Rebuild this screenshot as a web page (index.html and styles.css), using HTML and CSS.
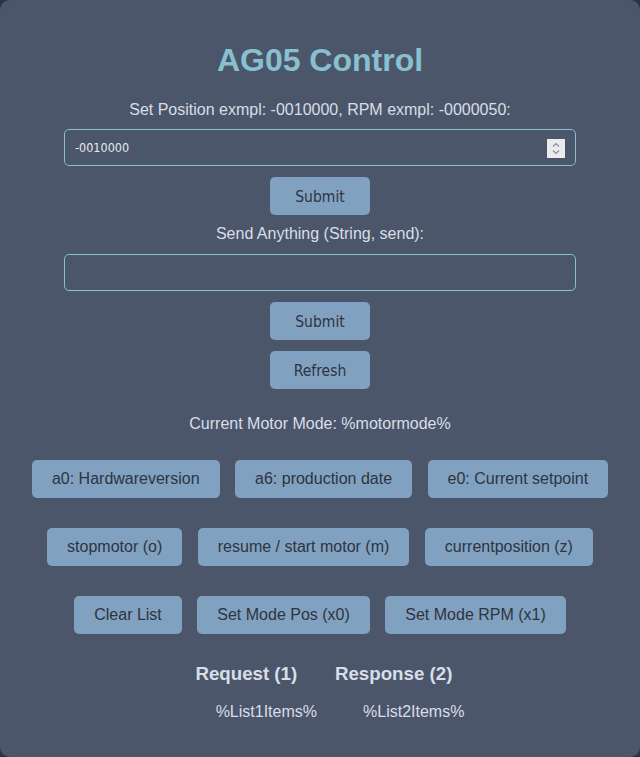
FILE: index.html
```html
<!DOCTYPE html>
<html lang="en">
<head>
<meta charset="utf-8">
<title>AG05 Control</title>
<link rel="stylesheet" href="styles.css">
</head>
<body>
<div class="panel">
  <h1 class="title">AG05 Control</h1>
  <label class="label" for="pos">Set Position exmpl: -0010000, RPM exmpl: -0000050:</label>
  <div class="field">
    <input class="input" id="pos" type="text" value="-0010000">
    <span class="spin" aria-hidden="true">
      <svg width="18" height="19" viewBox="0 0 18 19">
        <path d="M6 7.5 L9 4.5 L12 7.5" fill="none" stroke="#8a8f99" stroke-width="1.2"/>
        <path d="M6 11.5 L9 14.5 L12 11.5" fill="none" stroke="#8a8f99" stroke-width="1.2"/>
      </svg>
    </span>
  </div>
  <button class="btn-small">Submit</button>
  <label class="label label-gap" for="any">Send Anything (String, send):</label>
  <div class="field">
    <input class="input" id="any" type="text" value="">
  </div>
  <button class="btn-small">Submit</button>
  <button class="btn-small">Refresh</button>
  <p class="mode">Current Motor Mode: %motormode%</p>
  <div class="rows">
    <div class="row">
      <button class="btn">a0: Hardwareversion</button>
      <button class="btn">a6: production date</button>
      <button class="btn">e0: Current setpoint</button>
    </div>
    <div class="row">
      <button class="btn">stopmotor (o)</button>
      <button class="btn">resume / start motor (m)</button>
      <button class="btn">currentposition (z)</button>
    </div>
    <div class="row">
      <button class="btn">Clear List</button>
      <button class="btn">Set Mode Pos (x0)</button>
      <button class="btn">Set Mode RPM (x1)</button>
    </div>
  </div>
  <div class="lists">
    <div class="col">
      <h3 class="col-title">Request (1)</h3>
      <ul class="items"><li>%List1Items%</li></ul>
    </div>
    <div class="col">
      <h3 class="col-title">Response (2)</h3>
      <ul class="items"><li>%List2Items%</li></ul>
    </div>
  </div>
</div>
</body>
</html>
```
FILE: styles.css
```css
html, body {
  margin: 0;
  padding: 0;
  background: #2e3440;
}
.panel {
  background: #4c566a;
  border-radius: 10px;
  padding: 20px;
  min-height: 757px;
  box-sizing: border-box;
  text-align: center;
  font-family: "Liberation Sans", Arial, sans-serif;
  font-size: 16px;
  color: #d8dee9;
}
.title {
  margin: 22.4px 0 21.44px;
  font-size: 32px;
  line-height: 37px;
  font-weight: bold;
  color: #88c0d0;
}
.label {
  display: block;
  line-height: 18px;
}
.label-gap {
  margin-top: 10px;
}
.field {
  position: relative;
  width: 512px;
  margin: 10.5px auto 0;
}
.input {
  display: block;
  width: 512px;
  height: 37px;
  box-sizing: border-box;
  border: 1px solid #88c0d0;
  border-radius: 5px;
  background: transparent;
  color: #e5e9f0;
  padding: 0 10px;
  font-family: "DejaVu Sans Condensed", "DejaVu Sans", sans-serif;
  font-size: 12.5px;
  outline: none;
}
.spin {
  position: absolute;
  left: 483px;
  top: 10px;
  width: 18px;
  height: 19px;
  background: #ebebee;
  display: block;
}
.spin svg {
  display: block;
}
.btn-small {
  display: block;
  width: 100px;
  height: 38px;
  margin: 11px auto 0;
  border: none;
  border-radius: 5px;
  background: #81a1c1;
  color: #2e3440;
  font-family: "DejaVu Sans Condensed", "DejaVu Sans", sans-serif;
  font-size: 15.5px;
  padding: 2px 0 0;
}
.mode {
  margin: 26px 0 0;
  line-height: 18px;
}
.rows {
  margin-top: 27px;
  display: flex;
  flex-direction: column;
  gap: 30px;
}
.row {
  display: flex;
  justify-content: center;
  gap: 15.5px;
}
.btn {
  height: 38px;
  padding: 0 20px;
  border: none;
  border-radius: 5px;
  background: #81a1c1;
  color: #2e3440;
  font-family: "Liberation Sans", Arial, sans-serif;
  font-size: 16px;
}
.lists {
  margin-top: 29px;
  display: flex;
  justify-content: center;
  gap: 6px;
}
.col {
  text-align: center;
}
.col-title {
  margin: 0;
  font-size: 18.72px;
  line-height: 21.5px;
  font-weight: bold;
  color: #d8dee9;
}
.items {
  list-style: none;
  margin: 18.7px 0 0;
  padding: 0 0 0 40px;
  line-height: 18.4px;
}
```
